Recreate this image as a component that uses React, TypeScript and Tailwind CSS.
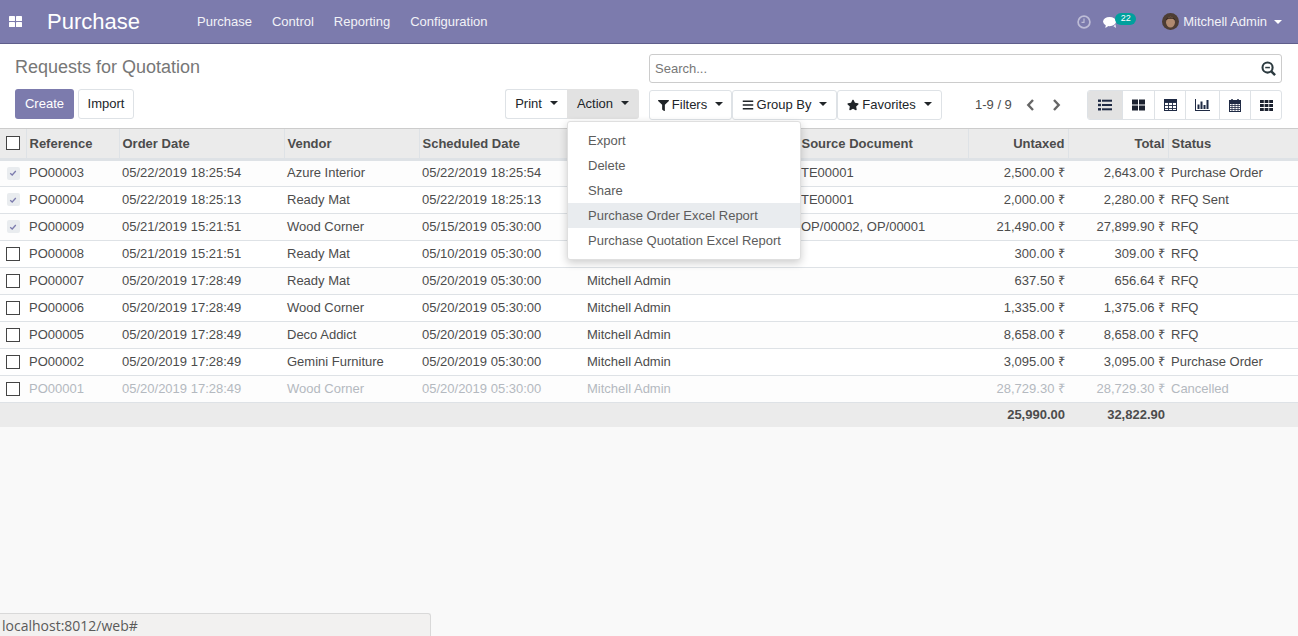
import { FaFilter, FaBars, FaStar, FaCaretDown } from "react-icons/fa";

const rows = [
  ["PO00003", "05/22/2019 18:25:54", "Azure Interior", "05/22/2019 18:25:54", "TE00001", "2,500.00", "2,643.00", "Purchase Order"],
  ["PO00004", "05/22/2019 18:25:13", "Ready Mat", "05/22/2019 18:25:13", "TE00001", "2,000.00", "2,280.00", "RFQ Sent"],
  ["PO00009", "05/21/2019 15:21:51", "Wood Corner", "05/15/2019 05:30:00", "OP/00002, OP/00001", "21,490.00", "27,899.90", "RFQ"],
  ["PO00008", "05/21/2019 15:21:51", "Ready Mat", "05/10/2019 05:30:00", "", "300.00", "309.00", "RFQ"],
  ["PO00007", "05/20/2019 17:28:49", "Ready Mat", "05/20/2019 05:30:00", "", "637.50", "656.64", "RFQ"],
  ["PO00006", "05/20/2019 17:28:49", "Wood Corner", "05/20/2019 05:30:00", "", "1,335.00", "1,375.06", "RFQ"],
  ["PO00005", "05/20/2019 17:28:49", "Deco Addict", "05/20/2019 05:30:00", "", "8,658.00", "8,658.00", "RFQ"],
  ["PO00002", "05/20/2019 17:28:49", "Gemini Furniture", "05/20/2019 05:30:00", "", "3,095.00", "3,095.00", "Purchase Order"],
  ["PO00001", "05/20/2019 17:28:49", "Wood Corner", "05/20/2019 05:30:00", "", "28,729.30", "28,729.30", "Cancelled"],
];

const Caret = () => <span className="ml-[8px] mb-[3px] inline-block border-x-[4px] border-t-[4px] border-x-transparent border-t-[#212529]" />;

const Box = ({ checked }: { checked?: boolean }) =>
  checked ? (
    <span className="mx-auto flex h-[13px] w-[13px] items-center justify-center rounded-[2px] bg-[#e9ecef]">
      <svg viewBox="0 0 10 10" className="h-[8px] w-[8px]">
        <path d="M1.5 5.2 4 7.5 8.5 2.5" fill="none" stroke="#7c7bad" strokeWidth="1.6" />
      </svg>
    </span>
  ) : (
    <span className="mx-auto block h-[14px] w-[14px] border border-[#444] bg-white" />
  );

const HeadCell = ({ label, right }: { label: string; right?: boolean }) => (
  <th className={`border-l border-[#dee2e6] px-[3px] pt-[1px] text-[13px] font-bold text-[#4c4c4c] ${right ? "text-right" : "text-left"}`}>
    {label}
  </th>
);

const ListIcon = () => (
  <svg viewBox="0 0 14 12" className="h-[12px] w-[14px]" fill="#1f2a44">
    <rect x="0" y="0.5" width="3" height="2.4" /><rect x="0" y="4.8" width="3" height="2.4" /><rect x="0" y="9.1" width="3" height="2.4" />
    <rect x="4" y="0.7" width="10" height="2" /><rect x="4" y="5" width="10" height="2" /><rect x="4" y="9.3" width="10" height="2" />
  </svg>
);
const KanbanIcon = () => (
  <svg viewBox="0 0 13 12" className="h-[12px] w-[13px]" fill="#1c2230">
    <rect x="0" y="0.5" width="6" height="5" /><rect x="7" y="0.5" width="6" height="5" /><rect x="0" y="6.5" width="6" height="5" /><rect x="7" y="6.5" width="6" height="5" />
  </svg>
);
const TableIcon = () => (
  <svg viewBox="0 0 13 12" className="h-[12px] w-[13px]" fill="none" stroke="#1f2a44">
    <rect x="0.5" y="0.5" width="12" height="11" />
    <path d="M0 3.5H13M0 6.5H13M0 9.5H13M4.5 3V12M8.5 3V12" strokeWidth="0.9" />
    <rect x="0.5" y="0.5" width="12" height="2.5" fill="#1f2a44" />
  </svg>
);
const ChartIcon = () => (
  <svg viewBox="0 0 15 12" className="h-[12px] w-[15px]" fill="#1f2a44">
    <rect x="0" y="0" width="1" height="12" /><rect x="0" y="11" width="15" height="1" />
    <rect x="2.5" y="5.5" width="2" height="4.5" /><rect x="5.5" y="2.5" width="2" height="7.5" /><rect x="8.5" y="6" width="2" height="4" /><rect x="11.5" y="1" width="2" height="9" />
  </svg>
);
const CalendarIcon = () => (
  <svg viewBox="0 0 12 13" className="h-[13px] w-[12px]" fill="none" stroke="#1f2a44">
    <rect x="0.5" y="1.5" width="11" height="11" />
    <path d="M0 6.5H12M0 8.5H12M0 10.5H12M3 5V13M6 5V13M9 5V13" strokeWidth="0.8" />
    <rect x="0.5" y="1.5" width="11" height="3" fill="#1f2a44" />
    <path d="M3 0V3M9 0V3" strokeWidth="1.5" />
  </svg>
);
const GridIcon = () => (
  <svg viewBox="0 0 13 11" className="h-[11px] w-[13px]" fill="#1c2230">
    {[0, 4, 8].flatMap((y) =>
      [0, 4.6, 9.2].map((x) => <rect key={`${x}-${y}`} x={x} y={y} width="3.8" height="3" />)
    )}
  </svg>
);

const views = [ListIcon, KanbanIcon, TableIcon, ChartIcon, CalendarIcon, GridIcon];
const viewWidths = ["w-[34px]", "w-[32px]", "w-[31px]", "w-[34px]", "w-[31px]", "w-[31px]"];

export default function App() {
  return (
    <div className="relative flex h-[636px] w-[1298px] flex-col overflow-hidden bg-[#f9f9f9] font-['Liberation_Sans',Arial,sans-serif] text-[13px] text-[#4c4c4c]">
      {/* navbar */}
      <header className="flex h-[44px] items-center border-b border-[#5f5e8b] bg-[#7c7bad] text-white">
        <svg viewBox="0 0 13 11" className="ml-[9px] h-[11px] w-[13px]" fill="white">
          <rect x="0" y="0" width="6" height="5" rx="0.6" /><rect x="7" y="0" width="6" height="5" rx="0.6" />
          <rect x="0" y="6" width="6" height="5" rx="0.6" /><rect x="7" y="6" width="6" height="5" rx="0.6" />
        </svg>
        <span className="ml-[25px] w-[150px] text-[22px]">Purchase</span>
        <nav className="flex gap-[20px] text-[13px] text-[#f2f2f7]">
          <span>Purchase</span>
          <span>Control</span>
          <span>Reporting</span>
          <span>Configuration</span>
        </nav>
        <div className="ml-auto flex items-center">
          <svg viewBox="0 0 14 14" className="h-[14px] w-[14px]" fill="none" stroke="#bdbcd6" strokeWidth="1.7">
            <circle cx="7" cy="7" r="5.9" />
            <path d="M7 3.5V7.4H4.5" strokeWidth="1.2" />
          </svg>
          <span className="relative ml-[12px] mr-[26px] flex w-[33px]">
            <svg viewBox="0 0 16 14" className="mt-[2px] h-[13px] w-[15px]" fill="white">
              <ellipse cx="7" cy="6" rx="7" ry="5" />
              <path d="M3 9 2.5 13 7 10Z" />
              <path d="M11 11 14 13 13.5 9Z" fill="#e4e4f0" />
            </svg>
            <span className="absolute left-[12px] top-[-1px] flex h-[12px] w-[21px] items-center justify-center rounded-full bg-[#00a09d] text-[9px] text-white">22</span>
          </span>
          <svg viewBox="0 0 16 16" className="h-[17px] w-[17px]">
            <circle cx="8" cy="8" r="8" fill="#4d3d34" />
            <ellipse cx="8" cy="8.6" rx="4.2" ry="5" fill="#b08a70" />
            <path d="M3.5 7C4 3 12 3 12.5 7L10 5.4H6Z" fill="#33261f" />
          </svg>
          <span className="ml-[4px] text-[#f2f2f7]">Mitchell Admin</span>
          <span className="ml-[7px] mr-[16px] inline-block border-x-[4px] border-t-[4px] border-x-transparent border-t-white" />
        </div>
      </header>

      {/* control panel */}
      <section className="grid h-[85px] grid-cols-[649px_633px] border-b border-[#cccccc] bg-white">
        <div className="pl-[15px] pr-[10px] pt-[11px]">
          <h1 className="h-[24px] text-[18px] leading-[24px] text-[#777777]">Requests for Quotation</h1>
          <div className="mt-[10px] flex items-start">
            <button className="h-[30px] w-[59px] rounded-[3px] bg-[#7c7bad] text-white">Create</button>
            <button className="ml-[4px] h-[30px] w-[56px] rounded-[3px] border border-[#dee2e6] bg-white text-[#212529]">Import</button>
            <div className="ml-auto flex h-[30px] rounded-[3px]">
              <button className="flex w-[62px] items-center justify-center rounded-l-[3px] border border-r-0 border-[#dee2e6] bg-white text-[#212529]">
                Print<Caret />
              </button>
              <div className="relative">
                <button className="flex h-[30px] w-[72px] items-center justify-center rounded-r-[3px] bg-[#e2e2e2] text-[#212529]">
                  Action<Caret />
                </button>
                <ul className="absolute left-0 top-[32px] z-10 w-[234px] rounded-[3px] border border-[#dfdfdf] bg-white py-[6px] shadow-[0_3px_8px_rgba(0,0,0,0.2)]">
                  {["Export", "Delete", "Share", "Purchase Order Excel Report", "Purchase Quotation Excel Report"].map((item, i) => (
                    <li key={item} className={`h-[25px] pl-[20px] leading-[25px] text-[#5c5c5c] ${i === 3 ? "bg-[#e9ecef]" : ""}`}>{item}</li>
                  ))}
                </ul>
              </div>
            </div>
          </div>
        </div>
        <div className="pt-[10px]">
          <div className="flex h-[29px] items-center justify-between rounded-[3px] border border-[#cccccc] pl-[5px] pr-[5px] text-[#777777]">
            <span>Search...</span>
            <svg viewBox="0 0 16 16" className="h-[15px] w-[15px]" fill="none" stroke="#2b3a3f">
              <circle cx="7" cy="7" r="5.4" strokeWidth="2.2" />
              <path d="M4.5 7H9.5" strokeWidth="1.6" />
              <path d="M11 11 15 15" strokeWidth="2.6" />
            </svg>
          </div>
          <div className="mt-[7px] flex items-center">
            <button className="flex h-[30px] w-[83px] items-center justify-center rounded-[3px] border border-[#dee2e6] text-[#212529]">
              <FaFilter className="mr-[3px] h-[11px] w-[11px]" />Filters<Caret />
            </button>
            <button className="flex h-[30px] w-[105px] items-center justify-center rounded-[3px] border border-[#dee2e6] text-[#212529]">
              <FaBars className="mr-[3px] h-[12px] w-[12px]" />Group By<Caret />
            </button>
            <button className="flex h-[30px] w-[105px] items-center justify-center rounded-[3px] border border-[#dee2e6] text-[#212529]">
              <FaStar className="mr-[3px] h-[12px] w-[12px]" />Favorites<Caret />
            </button>
            <span className="ml-[33px] text-[#4c4c4c]">1-9 / 9</span>
            <span className="ml-[14px] flex gap-[17px]">
              <svg viewBox="0 0 8 12" className="h-[12px] w-[9px]" fill="none" stroke="#666" strokeWidth="2.4"><path d="M6.5 1 1.8 6l4.7 5" /></svg>
              <svg viewBox="0 0 8 12" className="h-[12px] w-[9px]" fill="none" stroke="#666" strokeWidth="2.4"><path d="M1.5 1 6.2 6l-4.7 5" /></svg>
            </span>
            <div className="ml-auto flex h-[30px] overflow-hidden rounded-[3px] border border-[#dee2e6]">
              {views.map((Icon, i) => (
                <span key={i} className={`flex items-center justify-center ${viewWidths[i]} ${i > 0 ? "border-l border-[#dee2e6]" : "bg-[#e2e2e2]"}`}>
                  <Icon />
                </span>
              ))}
            </div>
          </div>
        </div>
      </section>

      {/* list */}
      <table className="w-[1298px] table-fixed border-collapse">
        <colgroup>
          <col className="w-[26px]" /><col className="w-[93px]" /><col className="w-[165px]" /><col className="w-[135px]" />
          <col className="w-[164px]" /><col className="w-[215px]" /><col className="w-[170px]" /><col className="w-[100px]" />
          <col className="w-[100px]" /><col className="w-[130px]" />
        </colgroup>
        <thead>
          <tr className="h-[30px] border-b-[3px] border-[#dee2e6] bg-[#ebebeb]">
            <th><Box /></th>
            <HeadCell label="Reference" />
            <HeadCell label="Order Date" />
            <HeadCell label="Vendor" />
            <HeadCell label="Scheduled Date" />
            <HeadCell label="Purchase Representative" />
            <HeadCell label="Source Document" />
            <HeadCell label="Untaxed" right />
            <HeadCell label="Total" right />
            <HeadCell label="Status" />
          </tr>
        </thead>
        <tbody>
          {rows.map((r, i) => (
            <tr key={r[0]} className={`h-[27px] border-b border-[#dee2e6] ${i % 2 === 0 ? "bg-[#fdfdfd]" : "bg-white"} ${i === 8 ? "text-[#b4b9c0]" : "text-[#4c4c4c]"}`}>
              <td><Box checked={i < 3} /></td>
              <td className="px-[3px]">{r[0]}</td>
              <td className="px-[3px]">{r[1]}</td>
              <td className="px-[3px]">{r[2]}</td>
              <td className="px-[3px]">{r[3]}</td>
              <td className="px-[4px]">Mitchell Admin</td>
              <td className="px-[3px]">{r[4]}</td>
              <td className="px-[3px] text-right">{r[5]} ₹</td>
              <td className="px-[3px] text-right">{r[6]} ₹</td>
              <td className="px-[3px]">{r[7]}</td>
            </tr>
          ))}
        </tbody>
        <tfoot>
          <tr className="h-[25px] bg-[#ebebeb] font-bold text-[#4c4c4c]">
            <td colSpan={7} />
            <td className="px-[3px] text-right">25,990.00</td>
            <td className="px-[3px] text-right">32,822.90</td>
            <td />
          </tr>
        </tfoot>
      </table>

      {/* browser status bubble */}
      <div className="absolute bottom-0 left-0 flex h-[23px] w-[431px] items-center rounded-tr-[3px] border-r border-t border-[#d9d9d9] bg-[#f2f1f0] pl-[2px] font-['Open_Sans',sans-serif] text-[14px] text-[#5a5a5a]">
        localhost:8012/web#
      </div>
    </div>
  );
}
